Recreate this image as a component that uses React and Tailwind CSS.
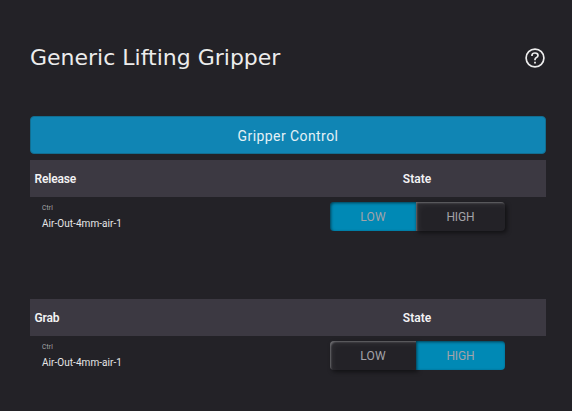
const sections = [
  { title: 'Release', high: false },
  { title: 'Grab', high: true },
];

const raised =
  'bg-[#232227] shadow-[inset_2px_2px_2px_-1px_rgba(255,255,255,0.3),inset_3px_3px_6px_rgba(255,255,255,0.05),2px_2px_4px_rgba(0,0,0,0.5)]';
const pressed =
  'bg-[#0089b5] shadow-[inset_1px_1px_3px_rgba(0,0,0,0.55)]';

function Toggle({ high }) {
  return (
    <div className="flex h-[29px] w-[175px] text-[12px] leading-[29px] text-[#a3a3a8]">
      <button className={`h-full w-[86px] rounded-l pt-px ${high ? raised : pressed}`}>
        <span className="tracking-[0.1px]">LOW</span>
      </button>
      <button className={`h-full w-[89px] rounded-r pt-px ${high ? pressed : raised}`}>
        <span className="tracking-[-0.1px]">HIGH</span>
      </button>
    </div>
  );
}

function Section({ title, high }) {
  return (
    <section className="h-[139px]">
      <div className="flex h-[37px] items-center bg-[#3c3942] text-[12px] font-semibold text-[#f3f3f4]">
        <h2 className="w-[288px] pl-[4.5px] tracking-[-0.15px]">{title}</h2>
        <div className="w-[198px] text-center">State</div>
      </div>
      <div className="flex pt-[5px]">
        <div className="w-[300px] pl-[12px]">
          <div className="pt-[2px] text-[6.5px] leading-[9px] tracking-[0.2px] text-[#aaaaae]">Ctrl</div>
          <div className="pt-[4px] text-[10px] leading-[14px] tracking-[0.05px] text-[#e6e6e8]">Air-Out-4mm-air-1</div>
        </div>
        <Toggle high={high} />
      </div>
    </section>
  );
}

export default function App() {
  return (
    <main className="h-[411px] w-[572px] overflow-hidden bg-[#232227] pl-[30px] pr-[26px] font-[Roboto,sans-serif]">
      <header className="flex h-[116px] items-center justify-between">
        <h1 className="font-['DejaVu_Sans',sans-serif] text-[22px] leading-[28px] text-[#ececec]">
          Generic Lifting Gripper
        </h1>
        <svg className="mr-px size-5" viewBox="0 0 20 20" fill="none" stroke="#ededed">
          <circle cx="10" cy="10" r="8.9" strokeWidth="1.7" />
          <path d="M7 8V7.3Q7 5 10 5T13 7.4Q13 8.7 11.5 9.4T10 11.6V12.2" strokeWidth="1.7" />
          <path d="M9.1 14.6h1.8" strokeWidth="1.9" />
        </svg>
      </header>
      <button className="mb-[6px] block h-[38px] w-full rounded border border-[#126e91] bg-[#1085b4] pt-px text-[14px] leading-[36px] tracking-[0.42px] text-[#e4f1f6]">
        Gripper Control
      </button>
      {sections.map((s) => (
        <Section key={s.title} {...s} />
      ))}
    </main>
  );
}
